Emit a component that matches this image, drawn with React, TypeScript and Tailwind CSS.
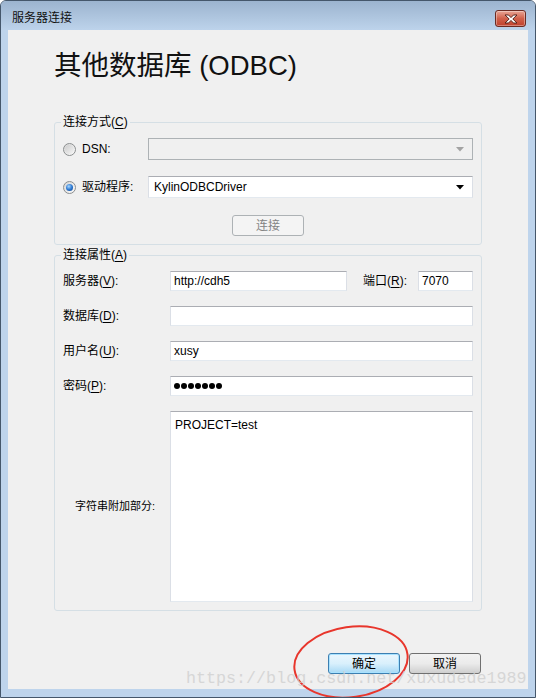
import React from 'react';

const Radio = ({ checked }: { checked?: boolean }) => (
    <span className="w-[13px] h-[13px] shrink-0 rounded-full border border-[#8b8e8f] bg-gradient-to-br from-[#d6d6d6] to-[#fbfbfb] flex items-center justify-center">
        {checked ? (
            <span className="w-[7px] h-[7px] rounded-full bg-[radial-gradient(circle_at_40%_35%,#a8d8ff_0%,#2f7ad2_50%,#0d3f86_100%)]" />
        ) : (
            <span className="w-[9px] h-[9px] rounded-full bg-gradient-to-br from-[#cdcdcd] to-[#f5f5f5]" />
        )}
    </span>
);

const Box = ({ className = '', children }: { className?: string; children?: React.ReactNode }) => (
    <div className={`h-[20px] bg-white border border-[#dbdfe6] border-t-[#abadb3] border-b-[#e3e9ef] pl-[3px] flex items-center ${className}`}>
        {children}
    </div>
);

const Select = ({ disabled, children }: { disabled?: boolean; children?: React.ReactNode }) => (
    <div
        className={`w-[325px] h-[22px] flex items-center justify-between pl-[5px] pr-[8px] border ${
            disabled ? 'bg-[#f0f0f0] border-[#adb2b5]' : 'bg-white border-[#dbdfe6] border-t-[#abadb3] border-b-[#e3e9ef]'
        }`}
    >
        <span>{children}</span>
        <svg width="8" height="5" viewBox="0 0 8 5">
            <path d="M0 0h8L4 4.5z" fill={disabled ? '#a3a3a3' : '#000'} />
        </svg>
    </div>
);

const Key = ({ k }: { k: string }) => <span className="underline underline-offset-[2px]">{k}</span>;

const WinButton = ({ children, focused }: { children: React.ReactNode; focused?: boolean }) => (
    <div
        className={`w-[72px] h-[21px] rounded-[3px] border flex items-center justify-center ${
            focused
                ? 'border-[#3c7fb1] bg-gradient-to-b from-[#eaf6fd] via-[#d9f0fc] to-[#a7d9f5] shadow-[inset_0_0_0_1px_#a8e2ff]'
                : 'border-[#707070] bg-gradient-to-b from-[#f2f2f2] via-[#ebebeb] to-[#cfcfcf]'
        }`}
    >
        {children}
    </div>
);

export default function App() {
    return (
        <div className="relative w-[536px] h-[698px] overflow-hidden bg-[#bed4ec] border border-[#45576b] rounded-t-[6px] font-['Liberation_Sans','Noto_Sans_CJK_SC',sans-serif] text-[12px] text-black">
            {/* Title bar */}
            <div className="h-[29px] flex items-start justify-between pl-[11px] pr-[9px] bg-gradient-to-b from-[#9cb4cf] to-[#bdd3eb]">
                <span className="mt-[9px] text-[12px] leading-[16px] text-[#111]">服务器连接</span>
                <div className="w-[31px] h-[17px] mt-[9px] rounded-[3px] border border-[#6b2b22] bg-gradient-to-b from-[#e8a595] via-[#d0604a] to-[#c0402c] flex items-center justify-center shadow-[inset_0_0_0_1px_rgba(255,255,255,0.35)]">
                    <svg width="14" height="10" viewBox="0 0 14 10">
                        <path d="M1 1h3.5L7 3.6 9.5 1H13L8.8 5 13 9H9.5L7 6.4 4.5 9H1L5.2 5z" fill="#fff" stroke="#4a1a12" strokeWidth="0.9" />
                    </svg>
                </div>
            </div>

            {/* Client area */}
            <div className="mx-[7px] h-[659px] bg-[#f0f0f0] px-[46px]">
                <h1 className="pt-[20px] text-[27.5px] leading-[32px] font-normal text-[#111]">其他数据库 (ODBC)</h1>

                {/* 连接方式 */}
                <fieldset className="mt-[32px] border border-[#d5dfe5] rounded-[3px] px-[8px] pb-[8px]">
                    <legend className="-ml-[2px] px-[2px] leading-[16px]">
                        连接方式(<Key k="C" />)
                    </legend>
                    <div className="mt-[8px] flex items-center">
                        <span className="w-[85px] flex items-center gap-[6px]">
                            <Radio />
                            DSN:
                        </span>
                        <Select disabled />
                    </div>
                    <div className="mt-[16px] flex items-center">
                        <span className="w-[85px] flex items-center gap-[6px]">
                            <Radio checked />
                            驱动程序:
                        </span>
                        <Select>KylinODBCDriver</Select>
                    </div>
                    <div className="mt-[17px] flex justify-center">
                        <div className="w-[72px] h-[21px] rounded-[3px] border border-[#adb2b5] bg-[#f4f4f4] text-[#838383] flex items-center justify-center">
                            连接
                        </div>
                    </div>
                </fieldset>

                {/* 连接属性 */}
                <fieldset className="mt-[2px] border border-[#d5dfe5] rounded-[3px] px-[8px] pb-[8px]">
                    <legend className="-ml-[2px] px-[2px] leading-[16px]">
                        连接属性(<Key k="A" />)
                    </legend>
                    <div className="mt-[8px] flex flex-col gap-[15px]">
                        <div className="flex items-center">
                            <span className="w-[107px]">
                                服务器(<Key k="V" />):
                            </span>
                            <Box className="w-[177px]">http://cdh5</Box>
                            <span className="ml-[16px] w-[55px]">
                                端口(<Key k="R" />):
                            </span>
                            <Box className="w-[55px]">7070</Box>
                        </div>
                        <div className="flex items-center">
                            <span className="w-[107px]">
                                数据库(<Key k="D" />):
                            </span>
                            <Box className="w-[303px]" />
                        </div>
                        <div className="flex items-center">
                            <span className="w-[107px]">
                                用户名(<Key k="U" />):
                            </span>
                            <Box className="w-[303px]">xusy</Box>
                        </div>
                        <div className="flex items-center">
                            <span className="w-[107px]">
                                密码(<Key k="P" />):
                            </span>
                            <Box className="w-[303px] gap-[1px]">
                                {Array.from({ length: 7 }).map((_, i) => (
                                    <span key={i} className="w-[6px] h-[6px] rounded-full bg-black" />
                                ))}
                            </Box>
                        </div>
                        <div className="flex items-center">
                            <span className="w-[107px] text-right pr-[15px] text-[11px]">字符串附加部分:</span>
                            <div className="w-[303px] h-[191px] bg-white border border-[#dbdfe6] border-t-[#abadb3] border-b-[#e3e9ef] pl-[4px] pt-[4px]">
                                PROJECT=test
                            </div>
                        </div>
                    </div>
                </fieldset>

                <div className="mt-[42px] mr-[1px] flex justify-end gap-[9px]">
                    <WinButton focused>确定</WinButton>
                    <WinButton>取消</WinButton>
                </div>
            </div>

            {/* annotation + watermark overlays */}
            <svg className="absolute left-[285px] top-[619px]" width="132" height="82" viewBox="0 0 132 82">
                <ellipse cx="65" cy="42" rx="57" ry="35" transform="rotate(-8 65 42)" fill="none" stroke="#e8362c" strokeWidth="2" />
            </svg>
            <div className="absolute left-[185px] top-[668px] font-['Liberation_Mono',monospace] text-[16.7px] leading-[20px] text-[#cfcfcf]/80 whitespace-nowrap">
                https://blog.csdn.net/xuxudede1989
            </div>
        </div>
    );
}
